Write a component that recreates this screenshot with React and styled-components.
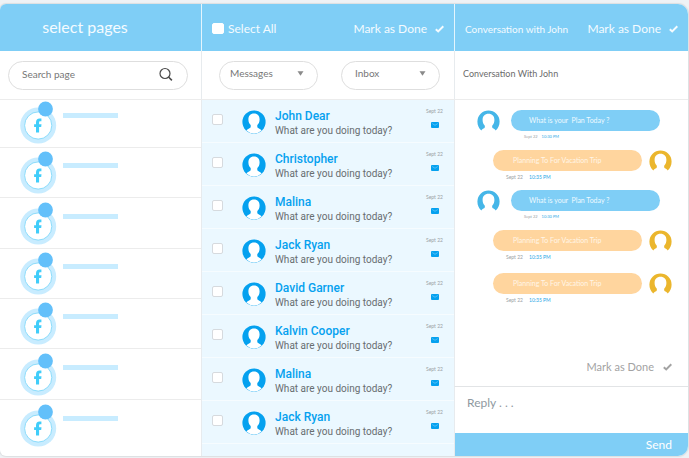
import React from 'react';
import styled, { createGlobalStyle } from 'styled-components';

const sky = '#7fcef6';
const azure = '#05a1ef';
const line = '#ececec';

const GlobalStyle = createGlobalStyle`
  * { box-sizing: border-box; }
  body { margin: 0; background: #eff2f5; font-family: Lato, sans-serif; color: #6b6b6b; }
  button, input, select, textarea { font: inherit; color: inherit; margin: 0; padding: 0; border: 0; background: none; outline: none; }
  button { cursor: pointer; }
  svg { display: block; flex: none; }
  ul, ol, h1, h2, h3, p { margin: 0; padding: 0; list-style: none; font-weight: 400; }
`;

const Shell = styled.div`
  height: 100vh;
  padding: 4px 1px 2px 0;
`;

const Panel = styled.main`
  display: grid;
  grid-template-columns: 201fr 253fr 234fr;
  height: 100%;
  background: #fff;
  border-radius: 6px 10px 10px 6px;
  box-shadow: 0 0 1px 1px #dcdfe1;
  overflow: hidden;
`;

const Column = styled.section`
  display: flex;
  flex-direction: column;
  min-width: 0;
  min-height: 0;
  overflow: hidden;
  & + & > :not(header) { border-left: 1px solid #e7ebee; }
  & + & > header { border-left: 1px solid #e4f5fd; }
`;

const Header = styled.header`
  display: flex;
  align-items: center;
  justify-content: ${(p) => (p.$center ? 'center' : 'space-between')};
  flex: none;
  height: 47px;
  padding: ${(p) => (p.$center ? '0 31px 2px 0' : '2px 10px 0 10px')};
  background: ${sky};
  color: #f4fbff;
  white-space: nowrap;
`;

const PagesTitle = styled.h1`
  font-size: 16px;
  line-height: 20px;
`;

const ChatTitle = styled.h2`
  font-size: 10px;
  line-height: 16px;
`;

const Bar = styled.div`
  display: flex;
  align-items: center;
  justify-content: space-between;
  flex: none;
  height: 49px;
  padding: ${(p) => p.$pad || '0 8px'};
  border-bottom: 1px solid ${line};
`;

const Search = styled.label`
  display: flex;
  align-items: center;
  flex: 1;
  height: 29px;
  margin-right: 5px;
  padding: 0 14px 2px 13px;
  border: 1px solid #dedede;
  border-radius: 15px;
  color: #4a4a4a;
`;

const SearchInput = styled.input`
  flex: 1;
  min-width: 0;
  font-size: 10px;
  line-height: 14px;
  &::placeholder { color: #777; opacity: 1; }
`;

const Pages = styled.ul`
  flex: 1;
  overflow: hidden;
`;

const PageRow = styled.li`
  display: flex;
  align-items: flex-end;
  gap: 6px;
  height: ${(p) => (p.$first ? '48px' : '50px')};
  padding: 0 0 3px 20px;
  border-bottom: 1px solid ${line};
  &:nth-child(3n) { height: 51px; }
  &:last-child { border-bottom: 0; }
`;

const PageLine = styled.span`
  width: 55px;
  height: 5px;
  margin-bottom: 26px;
  background: #c8ecff;
`;

const Check = styled.label`
  display: flex;
  align-items: center;
  gap: 4px;
  font-size: 12px;
  line-height: 16px;
`;

const Box = styled.input`
  appearance: none;
  width: ${(p) => (p.$solid ? '12px' : '11px')};
  height: 11px;
  flex: none;
  border: 1px solid ${(p) => (p.$solid ? '#fff' : '#d6dade')};
  border-radius: 2px;
  background: #fff;
  &:checked { background: ${azure}; }
`;

const DoneButton = styled.button`
  display: flex;
  align-items: center;
  gap: ${(p) => (p.$muted ? '9px' : '8px')};
  font-size: ${(p) => (p.$muted ? '11px' : '12px')};
  line-height: 16px;
  color: ${(p) => (p.$muted ? '#a3a3a3' : '#f4fbff')};
`;

const SelectPill = styled.label`
  display: grid;
  grid-template-columns: 1fr 16px;
  align-items: center;
  flex: 0 1 99px;
  height: 29px;
  padding: 0 4px 4px 10px;
  border: 1px solid #dedede;
  border-radius: 15px;
  color: #8a8a8a;
`;

const Select = styled.select`
  grid-area: 1 / 1 / 2 / 3;
  appearance: none;
  width: 100%;
  padding-left: ${(p) => p.$inset};
  font-size: 10px;
  line-height: 14px;
  color: #777;
`;

const ArrowSlot = styled.span`
  grid-area: 1 / 2;
  pointer-events: none;
`;

const Inbox = styled.ul`
  flex: 1;
  overflow: hidden;
  background: #ebf8ff;
`;

const InboxRow = styled.li`
  display: grid;
  grid-template-columns: 11px 24px 1fr auto;
  align-items: start;
  height: 43px;
  padding: 8px 11px 0 10px;
  border-bottom: 1px solid #f6fcff;
`;

const RowCheck = styled(Box)`
  margin-top: 6px;
`;

const Face = styled.span`
  margin: 2px 0 0 19px;
`;

const Message = styled.div`
  padding-left: 28px;
  font-family: Roboto, sans-serif;
  white-space: nowrap;
`;

const Name = styled.h3`
  font-size: 12px;
  line-height: 16px;
  font-weight: 500;
  color: ${azure};
`;

const Snippet = styled.p`
  font-size: 10px;
  line-height: 14px;
  color: #686d70;
`;

const RowMeta = styled.div`
  display: flex;
  flex-direction: column;
  align-items: center;
  gap: 8px;
  font-size: 5px;
  line-height: 6px;
  color: #9ba1a5;
`;

const Subject = styled.p`
  font-size: 9px;
  line-height: 14px;
  padding-bottom: 3px;
`;

const Thread = styled.ol`
  flex: 1;
  min-height: 0;
  overflow: hidden;
  padding: 10px 16px 0 22px;
`;

const Turn = styled.li`
  display: flex;
  flex-direction: ${(p) => (p.$mine ? 'row-reverse' : 'row')};
  gap: ${(p) => (p.$mine ? '7px' : '11px')};
  height: 40px;
  margin-right: ${(p) => (p.$mine ? '0' : '11px')};
  margin-top: ${(p) => (p.$follow ? '3px' : '0')};
`;

const Speech = styled.div`
  flex: 0 1 149px;
`;

const Bubble = styled.p`
  height: 21px;
  padding-left: ${(p) => (p.$mine ? '20px' : '18px')};
  border-radius: 11px;
  background: ${(p) => (p.$mine ? '#ffd59e' : sky)};
  color: ${(p) => (p.$mine ? '#fff5e8' : '#f0faff')};
  font-size: 7px;
  line-height: 21px;
  white-space: pre;
`;

const Stamp = styled.p`
  display: flex;
  gap: ${(p) => (p.$mine ? '6px' : '4px')};
  padding: 3px 0 0 13px;
  font-size: ${(p) => (p.$mine ? '5px' : '4px')};
  line-height: 6px;
  color: #9ba1a5;
`;

const Time = styled.time`
  color: #2ba8e6;
`;

const DoneBar = styled.div`
  display: flex;
  justify-content: flex-end;
  flex: none;
  padding: 0 16px 11px 0;
`;

const Reply = styled.textarea`
  display: block;
  flex: none;
  height: 47px;
  padding: 8px 12px;
  border-top: 1px solid #e2e4e6;
  resize: none;
  font-size: 12px;
  line-height: 16px;
  &::placeholder { color: #8f999f; opacity: 1; }
`;

const Send = styled.button`
  flex: none;
  height: 23px;
  padding-right: 16px;
  background: ${sky};
  color: #fff;
  font-size: 12px;
  line-height: 22px;
  text-align: right;
`;

const Tick = () => (
  <svg width="9" height="8" viewBox="0 0 9 8" fill="none" stroke="currentColor" strokeWidth="2">
    <path d="M0.8 4.2 3.2 6.4 8.3 1.2" />
  </svg>
);

const Magnifier = () => (
  <svg width="14" height="14" viewBox="0 0 14 14" fill="none" stroke="currentColor" strokeWidth="1.2">
    <circle cx="6" cy="6.5" r="5" />
    <path d="m9.5 10 3.400 3.400" strokeWidth="1.6" />
  </svg>
);

const Arrow = () => (
  <svg width="7" height="5" viewBox="0 0 7 5" fill="currentColor">
    <path d="M0.5 0.3h6L3.5 4.8z" />
  </svg>
);

const PageBadge = () => (
  <svg width="37" height="43" viewBox="0 0 37 43">
    <circle cx="18.2" cy="24.5" r="18" fill="#c8ecff" />
    <circle cx="18.2" cy="24.5" r="13.6" fill="#fff" stroke="#8bdcfb" strokeWidth="1" />
    <path d="M16 31.500v-5.500h-1.900v-2.700h1.900v-1.900c0-2.700 1.300-3.900 3.500-3.900h1.900v2.800h-1.100c-.9 0-1.200.4-1.200 1.300v1.700h2.400l-.3 2.700h-2.100v5.500z" fill="#40cdfa" />
    <circle cx="25.5" cy="8" r="7.4" fill="#63c0fa" />
  </svg>
);

const Avatar = () => (
  <svg width="24" height="24" viewBox="0 0 24 24">
    <circle cx="12" cy="12" r="11.6" fill={azure} />
    <path d="M12 3.500c3.800 0 5.600 2.500 5.600 6 0 2.500-.9 4.300-2.300 5.500v2.300c.3.900 2.600 1.200 4.400 3.300A11.600 11.600 0 0 1 4.300 20.600c1.800-2.100 4.100-2.400 4.400-3.300v-2.300c-1.400-1.200-2.300-3-2.300-5.500 0-3.500 1.800-6 5.600-6z" fill="#fff" />
  </svg>
);

const ThreadAvatar = ({ color }) => (
  <svg width="23" height="22" viewBox="0 0 23 22">
    <path d="M4.300 20.500C1.800 18.300.4 15.200.4 11.500a11.100 11.100 0 0 1 22.200 0c0 3.700-1.400 6.800-3.900 9-.6-1.400-1.900-1.900-3.200-2.600-.5-.6-.5-2 0-2.600 1.200-1.300 1.900-3.200 1.900-5.400 0-3.900-2.200-6.200-5.900-6.200s-5.900 2.300-5.900 6.200c0 2.200.7 4.100 1.900 5.400.5.6.5 2 0 2.600-1.300.7-2.600 1.200-3.200 2.600z" fill={color} />
  </svg>
);

const Envelope = () => (
  <svg width="8" height="6" viewBox="0 0 8 6">
    <rect width="8" height="6" rx="1" fill={azure} />
    <path d="m1.200 1.500 2.800 1.800 2.800-1.800" fill="none" stroke="#7fd0fa" strokeWidth=".6" />
  </svg>
);

const people = ['John Dear', 'Christopher', 'Malina', 'Jack Ryan', 'David Garner', 'Kalvin Cooper', 'Malina', 'Jack Ryan'];
const turns = [false, true, false, true, true];
const pages = [0, 1, 2, 3, 4, 5, 6];

function MarkDone({ muted }) {
  return (
    <DoneButton type="button" $muted={muted}>
      Mark as Done
      <Tick />
    </DoneButton>
  );
}

function Filter({ label, value, inset }) {
  return (
    <SelectPill>
      <Select aria-label={label} defaultValue={value} $inset={inset}>
        <option>{value}</option>
      </Select>
      <ArrowSlot><Arrow /></ArrowSlot>
    </SelectPill>
  );
}

export default function App() {
  return (
    <Shell>
      <GlobalStyle />
      <Panel>
        <Column>
          <Header $center><PagesTitle>select pages</PagesTitle></Header>
          <Bar>
            <Search>
              <SearchInput type="text" aria-label="Search page" placeholder="Search page" />
              <Magnifier />
            </Search>
          </Bar>
          <Pages>
            {pages.map((id) => (
              <PageRow key={id} $first={id === 0}>
                <PageBadge />
                <PageLine />
              </PageRow>
            ))}
          </Pages>
        </Column>

        <Column>
          <Header>
            <Check>
              <Box type="checkbox" $solid />
              Select All
            </Check>
            <MarkDone />
          </Header>
          <Bar $pad="0 14px 0 17px">
            <Filter label="Type" value="Messages" inset="0" />
            <Filter label="Folder" value="Inbox" inset="3px" />
          </Bar>
          <Inbox>
            {people.map((name, i) => (
              <InboxRow key={i}>
                <RowCheck type="checkbox" aria-label={`Select ${name}`} />
                <Face><Avatar /></Face>
                <Message>
                  <Name>{name}</Name>
                  <Snippet>What are you doing today?</Snippet>
                </Message>
                <RowMeta>
                  Sept 22
                  <Envelope />
                </RowMeta>
              </InboxRow>
            ))}
          </Inbox>
        </Column>

        <Column>
          <Header>
            <ChatTitle>Conversation with John</ChatTitle>
            <MarkDone />
          </Header>
          <Bar><Subject>Conversation With John</Subject></Bar>
          <Thread>
            {turns.map((mine, i) => (
              <Turn key={i} $mine={mine} $follow={mine && turns[i - 1]}>
                <ThreadAvatar color={mine ? '#ebb62d' : '#45b6e8'} />
                <Speech>
                  <Bubble $mine={mine}>{mine ? 'Planning To For Vacation Trip' : 'What is your  Plan Today ?'}</Bubble>
                  <Stamp $mine={mine}>
                    Sept 22
                    <Time>{mine ? '10:35 PM' : '10:30 PM'}</Time>
                  </Stamp>
                </Speech>
              </Turn>
            ))}
          </Thread>
          <DoneBar><MarkDone muted /></DoneBar>
          <Reply aria-label="Reply" placeholder="Reply . . ." />
          <Send type="button">Send</Send>
        </Column>
      </Panel>
    </Shell>
  );
}
